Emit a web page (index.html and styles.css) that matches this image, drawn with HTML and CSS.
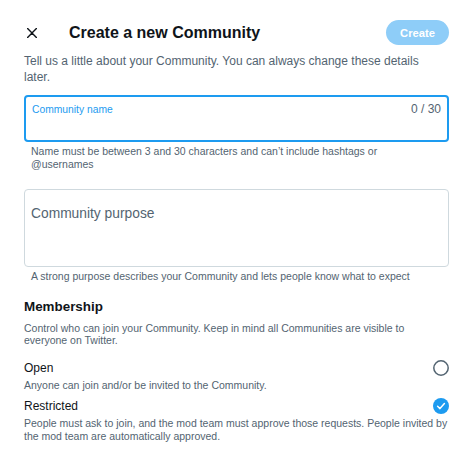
FILE: index.html
```html
<!DOCTYPE html>
<html lang="en">
<head>
<meta charset="utf-8">
<title>Create a new Community</title>
<link rel="stylesheet" href="styles.css">
</head>
<body>
<div class="page">
  <header class="header">
    <button class="close" aria-label="Close">
      <svg viewBox="0 0 10 10" width="10" height="10"><path d="M0.6 0.6 L9.4 9.4 M9.4 0.6 L0.6 9.4" stroke="#0f1419" stroke-width="1.4" stroke-linecap="round" fill="none"/></svg>
    </button>
    <h1 class="title">Create a new Community</h1>
    <button class="create">Create</button>
  </header>
  <p class="intro">Tell us a little about your Community. You can always change these details later.</p>

  <div class="field field-focus">
    <div class="field-top">
      <span class="field-label">Community name</span>
      <span class="field-count">0 / 30</span>
    </div>
  </div>
  <p class="hint">Name must be between 3 and 30 characters and can’t include hashtags or @usernames</p>

  <div class="field field-area">
    <span class="placeholder">Community purpose</span>
  </div>
  <p class="hint">A strong purpose describes your Community and lets people know what to expect</p>

  <h2 class="section">Membership</h2>
  <p class="desc">Control who can join your Community. Keep in mind all Communities are visible to everyone on Twitter.</p>

  <div class="option option-open">
    <span class="option-name">Open</span>
    <svg class="radio" viewBox="0 0 16 16" width="16" height="16"><circle cx="8" cy="8" r="7.2" fill="none" stroke="#536471" stroke-width="1.5"/></svg>
  </div>
  <p class="desc option-desc">Anyone can join and/or be invited to the Community.</p>

  <div class="option option-restricted">
    <span class="option-name">Restricted</span>
    <svg class="radio" viewBox="0 0 16 16" width="16" height="16"><circle cx="8" cy="8" r="8" fill="#1d9bf0"/><path d="M4.6 8.3 L7 10.6 L11.4 5.6" fill="none" stroke="#fff" stroke-width="1.5" stroke-linecap="round" stroke-linejoin="round"/></svg>
  </div>
  <p class="desc option-desc">People must ask to join, and the mod team must approve those requests. People invited by the mod team are automatically approved.</p>
</div>
</body>
</html>
```

FILE: styles.css
```css
* { box-sizing: border-box; }
html, body { margin: 0; padding: 0; background: #ffffff; }
body {
  font-family: "Liberation Sans", Arial, sans-serif;
  color: #0f1419;
}
.page {
  width: 474px;
  padding: 20px 25px 0 24px;
}
.header {
  display: flex;
  align-items: center;
  height: 25px;
}
.close {
  border: 0;
  background: none;
  padding: 0;
  margin: 0 0 0 3px;
  width: 10px;
  height: 10px;
  display: flex;
}
.title {
  margin: 0 0 0 32px;
  font-size: 16px;
  font-weight: 700;
  line-height: 20px;
  flex: 1;
}
.create {
  border: 0;
  margin: 0;
  height: 25px;
  width: 63px;
  border-radius: 13px;
  background: #8ecdf8;
  color: #ffffff;
  font-family: "Liberation Sans", Arial, sans-serif;
  font-weight: 700;
  font-size: 11.2px;
  padding: 0;
}
.intro {
  margin: 9px 0 0 0;
  padding-right: 16px;
  font-size: 12px;
  line-height: 15.5px;
  color: #536471;
}
.field {
  border-radius: 4px;
}
.field-focus {
  margin-top: 10px;
  height: 47px;
  border: 2px solid #1d9bf0;
  padding: 5.5px 6px 0 6px;
}
.field-top {
  display: flex;
  justify-content: space-between;
  align-items: center;
  height: 13px;
}
.field-label {
  font-size: 10.3px;
  color: #1d9bf0;
}
.field-count {
  font-size: 12px;
  color: #536471;
}
.hint {
  margin: 3px 0 0 0;
  padding: 0 12px 0 7px;
  font-size: 10.5px;
  line-height: 12.5px;
  color: #536471;
}
.field-area {
  margin-top: 19px;
  height: 78px;
  border: 1px solid #cfd9de;
  padding: 14.5px 6px 0 6px;
}
.placeholder {
  display: block;
  font-size: 13.8px;
  line-height: 17px;
  color: #536471;
}
.section {
  margin: 15px 0 0 0;
  font-size: 13.4px;
  line-height: 17px;
  font-weight: 700;
}
.desc {
  margin: 7px 0 0 0;
  font-size: 10.5px;
  line-height: 12.5px;
  color: #536471;
}
.option {
  display: flex;
  justify-content: space-between;
  align-items: center;
  height: 16px;
}
.option-open { margin-top: 13px; }
.option-restricted { margin-top: 7px; }
.option-name {
  font-size: 12px;
  line-height: 16px;
}
.radio { display: block; }
.option-desc { margin-top: 3px; }
```
